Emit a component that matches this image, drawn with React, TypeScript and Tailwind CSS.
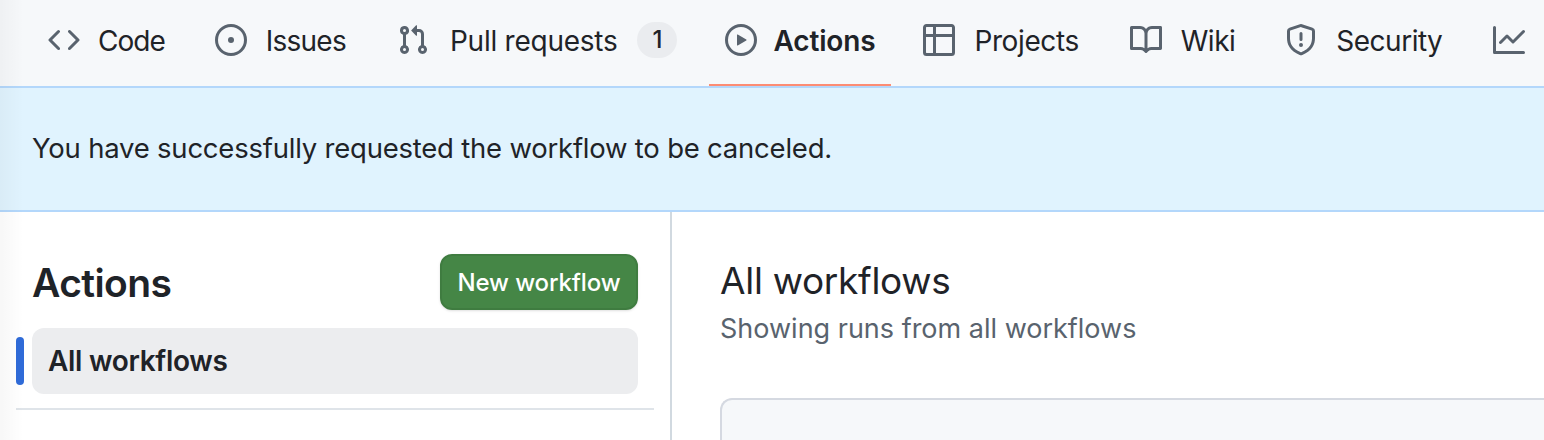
import React from "react";

type Tab = { d: string[]; label?: string; active?: boolean; count?: string; text?: string; after?: string };

const tabs: Tab[] = [
  { label: "Code", text: "tracking-[-1px] -ml-[1px]", after: "", d: ["m11.28 3.22 4.25 4.25a.75.75 0 0 1 0 1.06l-4.25 4.25a.749.749 0 0 1-1.275-.326.749.749 0 0 1 .215-.734L13.94 8l-3.72-3.72a.749.749 0 0 1 .326-1.275.749.749 0 0 1 .734.215Zm-6.56 0a.751.751 0 0 1 1.042.018.751.751 0 0 1 .018 1.042L2.06 8l3.72 3.72a.749.749 0 0 1-.326 1.275.749.749 0 0 1-.734-.215L.47 8.53a.75.75 0 0 1 0-1.06Z"] },
  { label: "Issues", text: "tracking-[-0.75px]", after: "mr-[1px]", d: ["M8 9.5a1.5 1.5 0 1 0 0-3 1.5 1.5 0 0 0 0 3Z", "M8 0a8 8 0 1 1 0 16A8 8 0 0 1 8 0ZM1.5 8a6.5 6.5 0 1 0 13 0 6.5 6.5 0 0 0-13 0Z"] },
  { label: "Pull requests", count: "1", text: "tracking-[-0.25px] ml-[2px]", after: "-mr-[2px]", d: ["M1.5 3.25a2.25 2.25 0 1 1 3 2.122v5.256a2.251 2.251 0 1 1-1.5 0V5.372A2.25 2.25 0 0 1 1.5 3.25Zm5.677-.177L9.573.677A.25.25 0 0 1 10 .854V2.5h1A2.5 2.5 0 0 1 13.5 5v5.628a2.251 2.251 0 1 1-1.5 0V5a1 1 0 0 0-1-1h-1v1.646a.25.25 0 0 1-.427.177L7.177 3.427a.25.25 0 0 1 0-.354ZM3.75 2.5a.75.75 0 1 0 0 1.5.75.75 0 0 0 0-1.5Zm0 9.5a.75.75 0 1 0 0 1.5.75.75 0 0 0 0-1.5Zm8.25.75a.75.75 0 1 0 1.5 0 .75.75 0 0 0-1.5 0Z"] },
  { label: "Actions", active: true, text: "tracking-[-0.15px] -ml-[1px]", after: "-mr-[2px]", d: ["M8 0a8 8 0 1 1 0 16A8 8 0 0 1 8 0ZM1.5 8a6.5 6.5 0 1 0 13 0 6.5 6.5 0 0 0-13 0Zm4.879-2.773 4.264 2.559a.25.25 0 0 1 0 .428l-4.264 2.559A.25.25 0 0 1 6 10.559V5.442a.25.25 0 0 1 .379-.215Z"] },
  { label: "Projects", text: "tracking-[-0.4px]", after: "mr-[1px]", d: ["M0 1.75C0 .784.784 0 1.75 0h12.5C15.216 0 16 .784 16 1.75v12.5A1.75 1.75 0 0 1 14.25 16H1.75A1.75 1.75 0 0 1 0 14.25ZM6.5 6.5v8h7.75a.25.25 0 0 0 .25-.25V6.5Zm8-1.5V1.75a.25.25 0 0 0-.25-.25H6.5V5Zm-13 1.5v7.75c0 .138.112.25.25.25H5v-8ZM5 5V1.5H1.75a.25.25 0 0 0-.25.25V5Z"] },
  { label: "Wiki", text: "tracking-[-0.5px]", after: "", d: ["M0 1.75A.75.75 0 0 1 .75 1h4.253c1.227 0 2.317.59 3 1.501A3.743 3.743 0 0 1 11.006 1h4.245a.75.75 0 0 1 .75.75v10.5a.75.75 0 0 1-.75.75h-4.507a2.25 2.25 0 0 0-1.591.659l-.622.621a.75.75 0 0 1-1.06 0l-.622-.621A2.25 2.25 0 0 0 5.258 13H.75a.75.75 0 0 1-.75-.75Zm7.251 10.324.004-5.073-.002-2.253A2.25 2.25 0 0 0 5.003 2.5H1.5v9h3.757a3.75 3.75 0 0 1 1.994.574ZM8.755 4.75l-.004 7.322a3.752 3.752 0 0 1 1.992-.572H14.5v-9h-3.495a2.25 2.25 0 0 0-2.25 2.25Z"] },
  { label: "Security", text: "tracking-[-0.5px]", after: "mr-[1px]", d: ["M7.467.133a1.748 1.748 0 0 1 1.066 0l5.25 1.68A1.75 1.75 0 0 1 15 3.48V7c0 1.566-.32 3.182-1.303 4.682-.983 1.498-2.585 2.813-5.032 3.855a1.697 1.697 0 0 1-1.33 0c-2.447-1.042-4.049-2.357-5.032-3.855C1.32 10.182 1 8.566 1 7V3.48a1.75 1.75 0 0 1 1.217-1.667Zm.61 1.429a.25.25 0 0 0-.153 0l-5.25 1.68a.25.25 0 0 0-.174.238V7c0 1.358.275 2.666 1.057 3.86.784 1.194 2.121 2.34 4.366 3.297a.196.196 0 0 0 .154 0c2.245-.956 3.582-2.104 4.366-3.298C13.225 9.666 13.5 8.36 13.5 7V3.48a.251.251 0 0 0-.174-.237l-5.25-1.68ZM8.75 4.75v3a.75.75 0 0 1-1.5 0v-3a.75.75 0 0 1 1.5 0ZM9 10.5a1 1 0 1 1-2 0 1 1 0 0 1 2 0Z"] },
  { d: ["M1.5 1.75V13.5h13.75a.75.75 0 0 1 0 1.5H.75a.75.75 0 0 1-.75-.75V1.75a.75.75 0 0 1 1.5 0Zm14.28 2.53-5.25 5.25a.75.75 0 0 1-1.06 0L7 7.06 4.28 9.78a.751.751 0 0 1-1.042-.018.751.751 0 0 1-.018-1.042l3.25-3.25a.75.75 0 0 1 1.06 0L10 7.94l4.72-4.72a.751.751 0 0 1 1.042.018.751.751 0 0 1 .018 1.042Z"] },
];

export default function App() {
  return (
    <div className="relative w-[1544px] h-[440px] overflow-hidden bg-white text-[#1f2328] font-['Inter','Liberation_Sans',sans-serif]">
      <nav className="h-[86px] bg-[#f6f8fa] flex items-stretch pl-[32px] gap-[18px] whitespace-nowrap">
        {tabs.map((t, i) => (
          <div key={i} className={`relative flex items-center px-[16px] pb-[6px] text-[28px] ${t.active ? "font-semibold gap-[17px]" : "gap-[19px]"} ${t.after ?? ""}`}>
            <svg viewBox="0 0 16 16" className="w-[32px] h-[32px] shrink-0" fill="#59636e" aria-hidden="true">
              {t.d.map((p, j) => <path key={j} d={p} />)}
            </svg>
            {t.label && <span className={`mt-[2px] ${t.text ?? ""}`}>{t.label}</span>}
            {t.count && (
              <span className="ml-[1px] w-[40px] h-[36px] rounded-full bg-[#eaecef] flex items-center justify-center text-[24px] font-medium">{t.count}</span>
            )}
            {t.active && <span className="absolute left-0 right-0 bottom-0 h-[2px] bg-[#fd8c73]" />}
          </div>
        ))}
      </nav>
      <div className="h-[126px] bg-[#e0f3fe] border-y-2 border-[#b3d7fb] flex items-center px-[32px] text-[27.5px] tracking-[-0.22px]">
        You have successfully requested the workflow to be canceled.
      </div>
      <div className="flex h-[228px]">
        <aside className="w-[672px] shrink-0 border-r-2 border-[#d1d9e0] pl-[16px] pr-[16px] pt-[42px]">
          <div className="pl-[16px] pr-[16px] flex items-center justify-between h-[56px]">
            <h2 className="text-[39px] font-semibold tracking-[-0.6px] pt-[2px]">Actions</h2>
            <button className="w-[198px] h-[56px] pt-[2px] rounded-[12px] bg-[#458646] border-2 border-[#3f7c40] shadow-sm text-white text-[24px] tracking-[-0.1px] font-medium">New workflow</button>
          </div>
          <div className="relative mt-[18px] mx-[16px] h-[66px] rounded-[12px] bg-[#ecedef] flex items-center pl-[16px] text-[28px] font-semibold tracking-[-0.3px]">
            All workflows
            <span className="absolute -left-[16px] top-[9px] w-[8px] h-[48px] rounded-[6px] bg-[#2f6bd8]" />
          </div>
          <div className="mt-[14px] h-[2px] bg-[#dfe4e9]" />
        </aside>
        <main className="flex-1 pl-[48px] pt-[45px]">
          <h1 className="text-[37px] leading-[48px] tracking-[-0.3px]">All workflows</h1>
          <p className="mt-[6px] text-[27px] leading-[36px] text-[#59636e]">Showing runs from all workflows</p>
          <div className="mt-[51px] h-[80px] rounded-tl-[12px] border-2 border-r-0 border-[#d5d9e1] bg-[#f6f8fa]" />
        </main>
      </div>
      <div className="absolute inset-y-0 left-0 w-[24px] bg-gradient-to-r from-black/3 to-transparent pointer-events-none" />
    </div>
  );
}
